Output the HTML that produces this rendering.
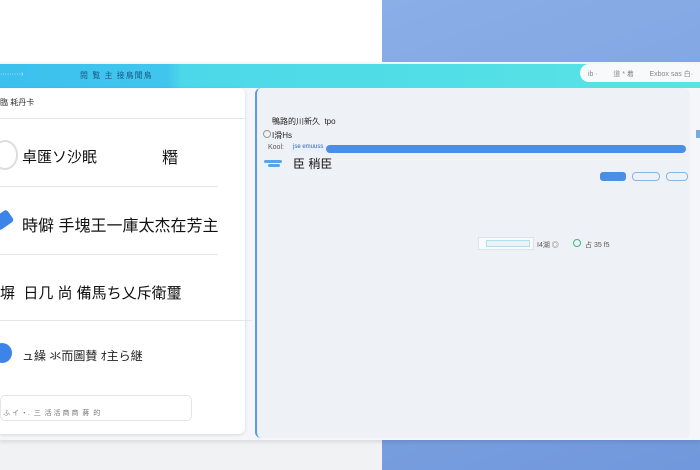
<!DOCTYPE html>
<html><head><meta charset="utf-8"><style>
*{margin:0;padding:0;box-sizing:border-box}
body{width:700px;height:470px;overflow:hidden;position:relative;background:#fff;font-family:"Liberation Sans","Noto Sans CJK SC",sans-serif;color:#222}
.a{position:absolute}
</style></head><body>
<div class="a" style="left:382px;top:0;width:318px;height:470px;background:linear-gradient(160deg,#8aaee6,#7198dc)"></div>
<div class="a" style="left:0;top:440px;width:382px;height:30px;background:#f1f2f4"></div>
<div class="a" style="left:0;top:62px;width:700px;height:378px;background:#f4f6f9;box-shadow:0 2px 4px rgba(0,0,0,.1)"></div>
<div class="a" style="left:0;top:64px;width:700px;height:24px;background:linear-gradient(90deg,#3cc0ee 0%,#40c6ee 24%,#4cd8e8 26%,#58e4e4 100%)"></div>
<div class="a" style="left:0;top:71px;font-size:7px;color:#e8f8ff">·········›</div>
<div class="a" style="left:80px;top:70px;font-size:8px;color:#1a5a80;letter-spacing:1px">閱 覧 主 接鳥聞鳥</div>
<div class="a" style="left:580px;top:64px;width:122px;height:18px;background:#f7f9fb;border-radius:9px 0 0 9px;font-size:7px;color:#888;padding:5px 0 0 8px;white-space:nowrap">ib · &nbsp;&nbsp;&nbsp;&nbsp;&nbsp;&nbsp; 道 * 着 &nbsp;&nbsp;&nbsp;&nbsp;&nbsp;&nbsp; Exbox sas 白·</div>
<div class="a" style="left:0;top:88px;width:245px;height:346px;background:#fff;border-radius:0 6px 6px 0;box-shadow:0 1px 3px rgba(0,0,0,.12)"></div>
<div class="a" style="left:0;top:97px;font-size:8px;color:#333">臨 耗丹卡</div>
<div class="a" style="left:0;top:118px;width:245px;height:1px;background:#e3e6ea"></div>
<div class="a" style="left:-8px;top:140px;width:26px;height:30px;border:2px solid #ddd;border-radius:50%"></div>
<div class="a" style="left:22px;top:146px;font-size:15px;color:#111">卓匯ソ沙眠</div>
<div class="a" style="left:162px;top:144px;font-size:16px;color:#111">糣</div>
<div class="a" style="left:0;top:186px;width:218px;height:1px;background:#e3e6ea"></div>
<div class="a" style="left:-6px;top:213px;width:18px;height:14px;background:#3c84e8;transform:rotate(-35deg);border-radius:3px"></div>
<div class="a" style="left:22px;top:212px;font-size:16px;color:#111">時僻 手塊王一庫太杰在芳主</div>
<div class="a" style="left:0;top:254px;width:218px;height:1px;background:#e3e6ea"></div>
<div class="a" style="left:0;top:282px;font-size:15px;color:#111">塀 &nbsp;日几 尚 備馬ち乂斥衛璽</div>
<div class="a" style="left:0;top:320px;width:252px;height:1px;background:#e3e6ea"></div>
<div class="a" style="left:-8px;top:343px;width:20px;height:20px;background:#3c84e8;border-radius:50%"></div>
<div class="a" style="left:22px;top:347px;font-size:12px;color:#222">ュ繰 氺而圖賛 ｵ主ら継</div>
<div class="a" style="left:0;top:395px;width:192px;height:26px;border:1px solid #e3e6ea;border-radius:5px;font-size:7px;color:#777;padding:12px 0 0 2px">ふ イ ・. &nbsp;三 &nbsp;活 活 商 商 &nbsp;蔣 &nbsp;的</div>
<div class="a" style="left:255px;top:88px;width:435px;height:350px;background:#eef2f7;border-left:2px solid #5b9be0;border-radius:6px"></div>
<div class="a" style="left:272px;top:116px;font-size:8px;color:#222">鴨路的川新久 &nbsp;tpo</div>
<div class="a" style="left:263px;top:130px;width:8px;height:8px;border:1px solid #999;border-radius:50%"></div>
<div class="a" style="left:272px;top:130px;font-size:8px">I滑Hs</div>
<div class="a" style="left:268px;top:144px;font-size:7px;color:#555">Kool:</div>
<div class="a" style="left:291px;top:144px;width:35px;height:9px;background:#e8f0fb;font-size:6px;color:#3666b0;padding-left:2px">jse emuuss</div>
<div class="a" style="left:326px;top:145px;width:360px;height:8px;background:#4a8ee6;border-radius:4px"></div>
<div class="a" style="left:264px;top:160px;width:18px;height:3px;background:#5aa4e6;border-radius:2px"></div>
<div class="a" style="left:268px;top:164px;width:12px;height:3px;background:#5aa4e6;border-radius:2px"></div>
<div class="a" style="left:293px;top:155px;font-size:12px;color:#111">臣 稍臣</div>
<div class="a" style="left:600px;top:172px;width:26px;height:9px;background:#4a8ee6;border-radius:3px"></div>
<div class="a" style="left:632px;top:172px;width:28px;height:9px;border:1px solid #8ab4e8;border-radius:4px"></div>
<div class="a" style="left:666px;top:172px;width:22px;height:9px;border:1px solid #8ab4e8;border-radius:4px"></div>
<div class="a" style="left:696px;top:130px;width:4px;height:8px;background:#7aa8e0"></div>
<div class="a" style="left:478px;top:237px;width:56px;height:13px;background:#f8fafc;border:1px solid #dde3ea"></div>
<div class="a" style="left:486px;top:240px;width:44px;height:7px;background:#e6f4f8;border:1px solid #b8dce8"></div>
<div class="a" style="left:537px;top:240px;font-size:7px;color:#555">I4湖 ◎</div>
<div class="a" style="left:573px;top:239px;width:8px;height:8px;border:1.5px solid #3cb878;border-radius:50%"></div>
<div class="a" style="left:585px;top:240px;font-size:7px;color:#555">占 35 f5</div>
</body></html>
